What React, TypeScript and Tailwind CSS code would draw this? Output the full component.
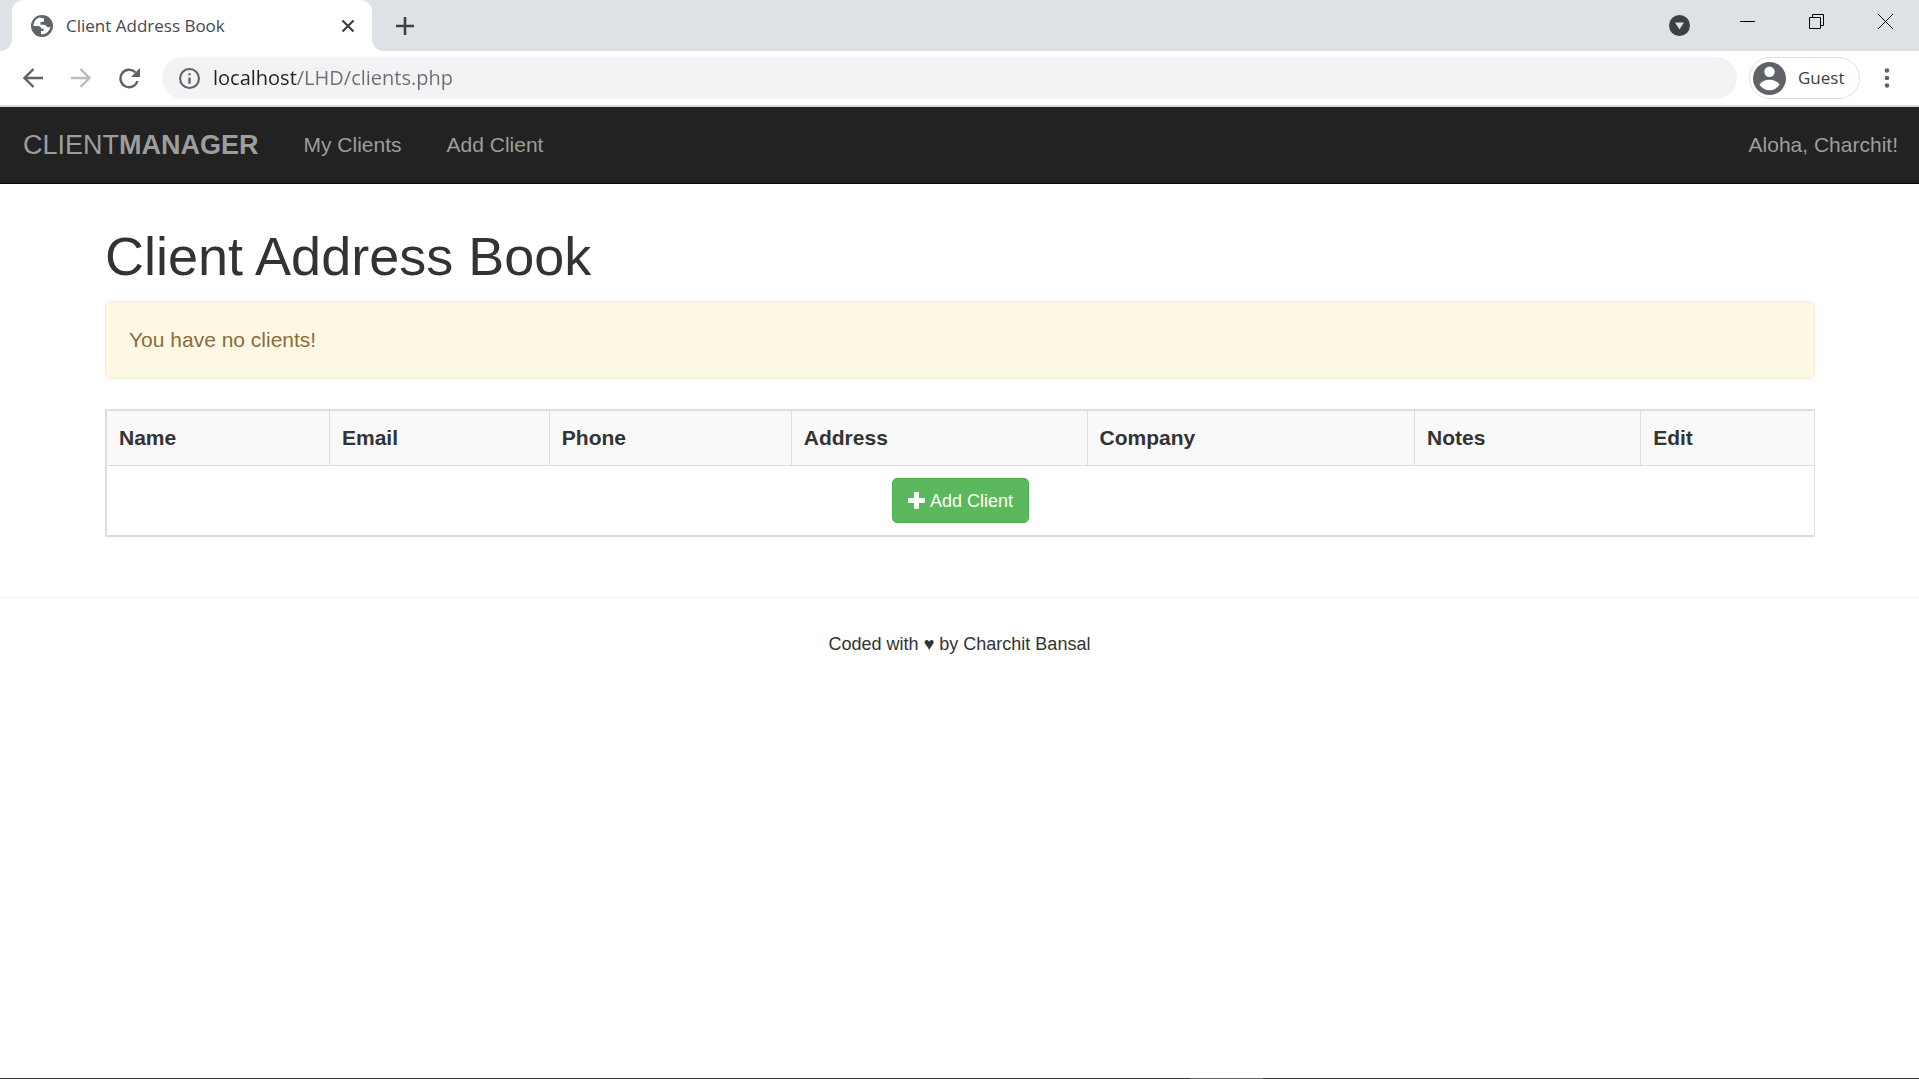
const columns = ["Name", "Email", "Phone", "Address", "Company", "Notes", "Edit"];

const TabStrip = () => {
  return (
    <div className="flex h-[51px] bg-[#dee1e6]">
      <div className="w-3 bg-white">
        <div className="h-full rounded-br-xl bg-[#dee1e6]"></div>
      </div>
      <div className="flex w-[360px] items-center rounded-t-xl bg-white pl-[19px] pr-[17px]">
        <svg className="size-[22px]" viewBox="0 0 22 22" aria-hidden="true">
          <circle cx="11" cy="11" r="11" fill="#5f6368" />
          <path d="M8.5 2.6C5 3.7 2.5 7 2.5 11h4.5c2 0 3 1 3 2.5h2.5v2.5h-2.5v3.3c5 .5 9-3.5 9.4-7.8-1 .8-2.4 1-3.4.2-1-.8-1.5-2-3-2H9.5V7h2.2c1 0 1.3-1 1.3-2V3.5" fill="#fff" />
        </svg>
        <span className="ml-[13px] grow text-[17px] text-[#45494d]">Client Address Book</span>
        <button aria-label="Close tab">
          <svg className="size-[14px]" viewBox="0 0 14 14" fill="none" stroke="#3c4043" strokeWidth="2.2">
            <path d="M1.5 1.5l11 11M12.5 1.5l-11 11" />
          </svg>
        </button>
      </div>
      <div className="w-3 bg-white">
        <div className="h-full rounded-bl-xl bg-[#dee1e6]"></div>
      </div>
      <button className="ml-3" aria-label="New tab">
        <svg className="size-[18px]" viewBox="0 0 18 18" fill="none" stroke="#3c4043" strokeWidth="2.6">
          <path d="M9 0v18M0 9h18" />
        </svg>
      </button>
      <div className="ml-auto flex items-center gap-[54px] pb-2 pr-[26px]">
        <button aria-label="Search tabs" className="mt-2 -mr-1">
          <svg className="size-[21px]" viewBox="0 0 21 21">
            <circle cx="10.5" cy="10.5" r="10.5" fill="#3c4043" />
            <path d="M6 7.5h9l-4.5 7z" fill="#dee1e6" />
          </svg>
        </button>
        <button aria-label="Minimize">
          <svg className="size-[15px]" viewBox="0 0 15 15" stroke="#000"><path d="M0 7.5h15" /></svg>
        </button>
        <button aria-label="Restore">
          <svg className="size-[15px]" viewBox="0 0 15 15" fill="none" stroke="#000">
            <path d="M.5 3.5h11v11H.5zM3.5 3.5v-3h11v11h-3" />
          </svg>
        </button>
        <button aria-label="Close">
          <svg className="size-[15px]" viewBox="0 0 15 15" stroke="#000"><path d="M0 0l15 15M15 0L0 15" /></svg>
        </button>
      </div>
    </div>
  );
};

const Toolbar = () => {
  return (
    <div className="flex h-14 items-center border-b-2 border-[#dadada] bg-white pl-[23px] pr-[29px]">
      <button aria-label="Back">
        <svg className="size-5" viewBox="0 0 20 20" fill="none" stroke="#5f6368" strokeWidth="2.4">
          <path d="M20 10H1.5M10.5 1l-9 9 9 9" />
        </svg>
      </button>
      <button aria-label="Forward" className="ml-7">
        <svg className="size-5" viewBox="0 0 20 20" fill="none" stroke="#babcbe" strokeWidth="2.4">
          <path d="M0 10h18.5M9.5 1l9 9-9 9" />
        </svg>
      </button>
      <button aria-label="Reload" className="ml-7">
        <svg className="size-[21px]" viewBox="0 0 21 21">
          <path d="M18.5 13A8.7 8.7 0 1 1 16.5 4.5" fill="none" stroke="#5f6368" strokeWidth="2.4" />
          <path d="M21 0v9h-9z" fill="#5f6368" />
        </svg>
      </button>
      <div className="ml-[22px] flex h-[42px] grow items-center rounded-full bg-[#f1f3f4] pl-[17px]">
        <svg className="size-[21px] shrink-0" viewBox="0 0 20 20" fill="none" stroke="#5f6368" strokeWidth="2">
          <circle cx="10" cy="10" r="9" />
          <path d="M10 9v6M10 5v2" strokeWidth="2.2" />
        </svg>
        <input
          aria-label="Address bar"
          defaultValue="localhost/LHD/clients.php"
          className="ml-[13px] grow bg-[linear-gradient(90deg,#202124_84px,#6b6f73_84px)] bg-clip-text text-xl text-transparent outline-none"
        />
      </div>
      <button className="ml-3 flex h-[42px] w-[111px] items-center rounded-full border border-[#dfe1e3] pl-[3px] text-[17px] text-[#3c4043]">
        <svg className="mr-3 size-[33px]" viewBox="0 0 33 33" aria-hidden="true">
          <circle cx="16.5" cy="16.5" r="16.5" fill="#5f6368" />
          <circle cx="16.5" cy="9.8" r="5.2" fill="#fff" />
          <path d="M6.5 22.5c2-3 6-4.7 10-4.7s8 1.7 10 4.7c-2 3.5-6 5.8-10 5.8s-8-2.3-10-5.8z" fill="#fff" />
        </svg>
        Guest
      </button>
      <button aria-label="Menu" className="ml-6">
        <svg className="h-5 w-[6px]" viewBox="0 0 6 20" fill="#5f6368">
          <circle cx="3" cy="2.5" r="2.3" />
          <circle cx="3" cy="10" r="2.3" />
          <circle cx="3" cy="17.5" r="2.3" />
        </svg>
      </button>
    </div>
  );
};

const Navbar = () => {
  return (
    <nav className="flex h-[77px] items-center border-b border-[#080808] bg-[#222] pl-[23px] pr-[21px] text-[21px] text-[#9d9d9d]">
      <a href="#" className="text-[27px]">
        CLIENT<strong>MANAGER</strong>
      </a>
      <a href="#" className="ml-[45px]">My Clients</a>
      <a href="#" className="ml-[45px]">Add Client</a>
      <p className="ml-auto">Aloha, Charchit!</p>
    </nav>
  );
};

const App = () => {
  return (
    <div className="flex min-h-screen flex-col bg-white font-['Liberation_Sans',Arial,sans-serif] text-[#333]">
      <header className="font-['Open_Sans','Noto_Sans',sans-serif]">
        <TabStrip />
        <Toolbar />
      </header>
      <Navbar />
      <main className="pl-[105px] pr-[104px] pt-[42px]">
        <h1 className="text-[54px] leading-[60px]">Client Address Book</h1>
        <div className="mt-[15px] rounded-md border border-[#faebcc] bg-[#fcf8e3] p-[23px] text-[21px] leading-[30px] text-[#8a6d3b]">
          You have no clients!
        </div>
        <table className="mt-[30px] w-full border-separate border-spacing-0 border-2 border-r border-[#ddd] text-[21px] leading-[30px]">
          <thead>
            <tr className="bg-[#f9f9f9] text-left">
              {columns.map((name) => (
                <th key={name} className="border-r border-b border-[#ddd] p-3 font-bold last:border-r-0">{name}</th>
              ))}
            </tr>
          </thead>
          <tbody>
            <tr>
              <td colSpan={7} className="p-3">
                <a href="#" className="mx-auto flex h-[45px] w-fit items-center rounded-[5px] border border-[#4cae4c] bg-[#5cb85c] px-[15px] text-lg leading-[26px] text-white">
                  <svg className="mr-[5px] size-[17px]" viewBox="0 0 17 17" fill="#fff" aria-hidden="true">
                    <path d="M7 0h3q1 0 1 1v5h5q1 0 1 1v3q0 1-1 1h-5v5q0 1-1 1H7q-1 0-1-1v-5H1q-1 0-1-1V7q0-1 1-1h5V1q0-1 1-1z" />
                  </svg>
                  Add Client
                </a>
              </td>
            </tr>
          </tbody>
        </table>
      </main>
      <footer className="mt-[60px] border-t border-[#eee] pt-8 text-center text-lg">
        Coded with ♥ by Charchit Bansal
      </footer>
      <div className="mt-auto flex h-px bg-[#333]">
        <div className="ml-[62%] w-[73px] bg-[#666]"></div>
      </div>
    </div>
  );
};

export default App;
